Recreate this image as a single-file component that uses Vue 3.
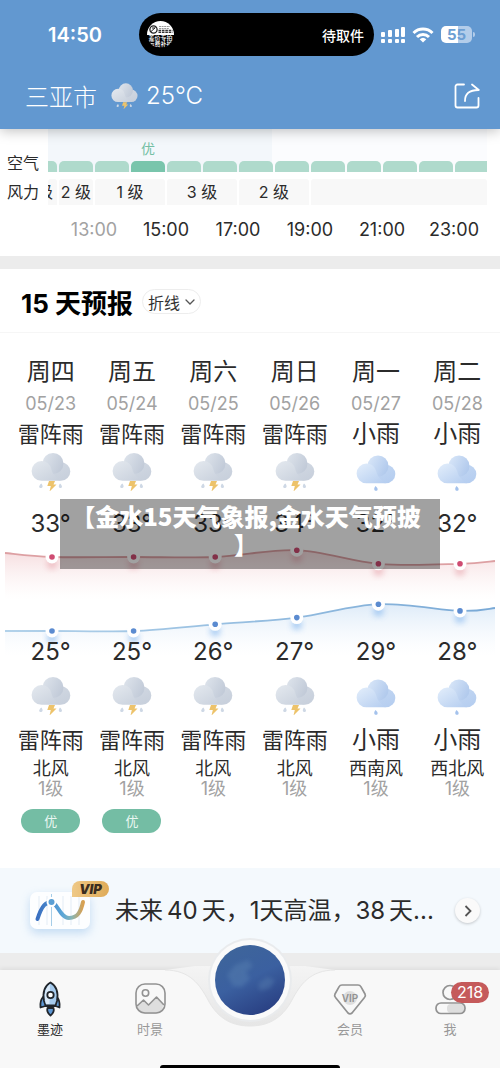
<script setup>
import { computed } from "vue";

// 空气质量，width 为可见宽度占比
const airList = [
  { width: 9 },
  { width: 34 },
  { width: 34 },
  { width: 34, active: true },
  { width: 34 },
  { width: 34 },
  { width: 34 },
  { width: 34 },
  { width: 34 },
  { width: 34 },
  { width: 34 },
  { width: 34 },
  { width: 32 },
];

// 风力
const windList = [
  { width: 9, text: "级" },
  { width: 34, text: "2 级" },
  { width: 70, text: "1 级" },
  { width: 70, text: "3 级" },
  { width: 70, text: "2 级" },
  { width: 176, text: "" },
];

const hours = ["13:00", "15:00", "17:00", "19:00", "21:00", "23:00"];

// 15 天预报
const days = [
  { week: "周四", date: "05/23", weather: "雷阵雨", icon: "storm", high: 33, low: 25, wind: "北风", air: "优" },
  { week: "周五", date: "05/24", weather: "雷阵雨", icon: "storm", high: 33, low: 25, wind: "北风", air: "优" },
  { week: "周六", date: "05/25", weather: "雷阵雨", icon: "storm", high: 33, low: 26, wind: "北风" },
  { week: "周日", date: "05/26", weather: "雷阵雨", icon: "storm", high: 34, low: 27, wind: "北风" },
  { week: "周一", date: "05/27", weather: "小雨", icon: "rain", high: 32, low: 29, wind: "西南风" },
  { week: "周二", date: "05/28", weather: "小雨", icon: "rain", high: 32, low: 28, wind: "西北风" },
];

const pointX = (i) => 52 + i * 81.6;

const highPoints = computed(() =>
  days.map((d, i) => ({ x: pointX(i), y: 17 + (33 - d.high) * 6.8 }))
);

const lowPoints = computed(() =>
  days.map((d, i) => ({ x: pointX(i), y: 91 - (d.low - 25) * 6.7 }))
);

// 平滑曲线
function smooth(points) {
  let path = `M${points[0].x} ${points[0].y}`;
  for (let i = 0; i < points.length - 1; i++) {
    const p0 = points[i - 1] || points[i];
    const p1 = points[i];
    const p2 = points[i + 1];
    const p3 = points[i + 2] || p2;
    path += ` C${p1.x + (p2.x - p0.x) / 6} ${p1.y + (p2.y - p0.y) / 6} ${p2.x - (p3.x - p1.x) / 6} ${p2.y - (p3.y - p1.y) / 6} ${p2.x} ${p2.y}`;
  }
  return path;
}

const highLine = computed(() =>
  smooth([{ x: 5, y: 13 }, ...highPoints.value, { x: 495, y: 21 }])
);
const lowLine = computed(() =>
  smooth([{ x: 5, y: 91 }, ...lowPoints.value, { x: 495, y: 68 }])
);
</script>

<template>
  <div class="page">
    <!-- 公用图形 -->
    <svg class="defs" aria-hidden="true">
      <defs>
        <linearGradient id="grayBack" x1="0" y1="0.200" x2="1" y2="0.700">
          <stop offset="0" stop-color="#dde3eb" />
          <stop offset="1" stop-color="#c0c9d7" />
        </linearGradient>
        <linearGradient id="grayRight" x1="0" y1="0" x2="0.5" y2="1">
          <stop offset="0" stop-color="#d2d9e3" />
          <stop offset="1" stop-color="#c8d0dc" />
        </linearGradient>
        <linearGradient id="grayFront" x1="0" y1="0" x2="0.9" y2="1">
          <stop offset="0" stop-color="#e4e9ef" />
          <stop offset="1" stop-color="#c8d0dc" />
        </linearGradient>
        <linearGradient id="blueBack" x1="0" y1="0.200" x2="1" y2="0.700">
          <stop offset="0" stop-color="#d8e6f8" />
          <stop offset="1" stop-color="#afc8ec" />
        </linearGradient>
        <linearGradient id="blueRight" x1="0" y1="0" x2="0.5" y2="1">
          <stop offset="0" stop-color="#c3d7f2" />
          <stop offset="1" stop-color="#b6cef0" />
        </linearGradient>
        <linearGradient id="blueFront" x1="0" y1="0" x2="0.9" y2="1">
          <stop offset="0" stop-color="#e3eefb" />
          <stop offset="1" stop-color="#b6cef0" />
        </linearGradient>
        <symbol id="storm" viewBox="0 0 40 40">
          <circle cx="30" cy="20.500" r="9.300" fill="url(#grayRight)" />
          <circle cx="22" cy="12.500" r="10.500" fill="url(#grayBack)" />
          <path d="M10.500 10a10 10 0 0 1 9.800 8c1.200 5.500 5 8.500 9.700 11.800H10.500a9.900 9.900 0 0 1 0-19.800z" fill="url(#grayFront)" />
          <path d="M18 30h6l-1.500 3.500h3l-7 7 1.300-5.500h-3.500z" fill="#edc36b" />
          <path d="M10.300 32.500c2 2.200 1.700 4.500-.500 4.500s-2.200-2.200.500-4.500zM29 32.500c2.700 2.300 2.500 4.500.500 4.500s-2.300-2.300-.500-4.500z" fill="#ced8e5" />
        </symbol>
        <symbol id="rain" viewBox="0 0 40 40">
          <circle cx="30" cy="23" r="9.300" fill="url(#blueRight)" />
          <circle cx="22" cy="15" r="10.500" fill="url(#blueBack)" />
          <path d="M10.500 12.500a10 10 0 0 1 9.800 8c1.200 5.500 5 8.500 9.700 11.800H10.500a9.900 9.900 0 0 1 0-19.800z" fill="url(#blueFront)" />
          <path d="M19.500 35c3 2.500 2.500 4.800.500 4.800s-2.500-2.300-.500-4.800z" fill="#a4c2ec" />
        </symbol>
      </defs>
    </svg>

    <header class="header">
      <div class="status-bar">
        <span class="clock">14:50</span>
        <div class="island">
          <div class="courier">
            <svg viewBox="0 0 27 14" aria-hidden="true">
              <circle cx="6.500" cy="8.500" r="3.600" fill="none" stroke="#222" stroke-width="1.300" />
              <path d="M4 10.500l4.500-4M5 7h3" stroke="#222" stroke-width="1" />
              <path d="M12 5.500h11M12 7.500h10" stroke="#999" stroke-width="1" stroke-dasharray="2 .6" />
              <path d="M11.500 9.500h14M11.500 11.300h14" stroke="#333" stroke-width="1.300" stroke-dasharray="2.600 .8" />
            </svg>
            <span>差价专拍</span>
            <span>运费补扩</span>
          </div>
          <span>待取件</span>
        </div>
        <div class="signals">
          <svg width="26" height="18" viewBox="0 0 26 18" fill="#fff" aria-label="信号">
            <rect x="0" y="6" width="4" height="5" rx="1" />
            <rect x="7" y="4" width="4" height="7" rx="1" />
            <rect x="14" y="3" width="4" height="8" rx="1" />
            <rect x="20" y="1" width="4" height="10" rx="1" />
            <rect x="0" y="13" width="4" height="4" rx="1" />
            <rect x="7" y="13" width="4" height="4" rx="1" />
            <rect x="14" y="13" width="4" height="4" rx="1" />
            <rect x="20" y="13" width="4" height="4" rx="1" />
          </svg>
          <svg width="22" height="16" viewBox="0 0 22 16" fill="none" stroke="#fff" stroke-width="3" aria-label="无线网络">
            <path d="M1.500 6a13.500 13.500 0 0 1 19 0" />
            <path d="M5 10a8.500 8.500 0 0 1 12 0" />
            <path d="M11 15.500l-3.300-3.200a4.800 4.800 0 0 1 6.600 0z" fill="#fff" stroke="none" />
          </svg>
          <div class="battery"><span>55</span></div>
        </div>
      </div>
      <div class="city-row">
        <span class="city">三亚市</span>
        <svg class="city-icon" aria-hidden="true"><use href="#storm" /></svg>
        <span class="now">25°C</span>
        <button class="share" type="button" aria-label="分享">
          <svg width="26" height="26" viewBox="0 0 26 26" fill="none" stroke="#fff" stroke-width="1.800" stroke-linecap="round" stroke-linejoin="round">
            <path d="M10 1.500H3.500a2 2 0 0 0-2 2v19a2 2 0 0 0 2 2h19a2 2 0 0 0 2-2V15" />
            <path d="M11 18c0-7 4-11 13.500-11M18 1.500L24.800 7" />
          </svg>
        </button>
      </div>
    </header>

    <!-- 逐小时 -->
    <section class="hourly">
      <div class="air-row">
        <span class="row-name">空气</span>
        <div class="strip">
          <div
            v-for="(a, i) in airList"
            :key="i"
            class="air-cell"
            :class="{ active: a.active }"
            :style="{ flexGrow: a.width }"
          >
            <span v-if="a.active">优</span>
            <i></i>
          </div>
        </div>
      </div>
      <div class="wind-row">
        <span class="row-name">风力</span>
        <div class="strip">
          <div v-for="(w, i) in windList" :key="i" class="wind-cell" :style="{ flexGrow: w.width }">
            <span>{{ w.text }}</span>
          </div>
        </div>
      </div>
      <div class="hours">
        <span v-for="h in hours" :key="h">{{ h }}</span>
      </div>
    </section>

    <!-- 15 天预报 -->
    <section class="forecast">
      <div class="forecast-title">
        <h2>15 天预报</h2>
        <button class="mode" type="button">
          折线
          <svg width="10" height="6" viewBox="0 0 10 6" fill="none" stroke="#555" stroke-width="1.300" stroke-linecap="round">
            <path d="M1 1l4 4 4-4" />
          </svg>
        </button>
      </div>

      <div class="days">
        <div v-for="d in days" :key="d.date" class="day">
          <span class="week">{{ d.week }}</span>
          <span class="date">{{ d.date }}</span>
          <span class="weather" :class="d.icon">{{ d.weather }}</span>
          <svg class="icon" aria-hidden="true"><use :href="'#' + d.icon" /></svg>
          <span class="temp">{{ d.high }}°</span>
        </div>
      </div>

      <svg class="chart" viewBox="0 0 500 96" aria-hidden="true">
        <defs>
          <linearGradient id="highFill" gradientUnits="userSpaceOnUse" x1="0" y1="10" x2="0" y2="60">
            <stop offset="0" stop-color="#e08a90" stop-opacity="0.300" />
            <stop offset="1" stop-color="#f5d5d5" stop-opacity="0" />
          </linearGradient>
          <linearGradient id="lowFill" gradientUnits="userSpaceOnUse" x1="0" y1="62" x2="0" y2="116">
            <stop offset="0" stop-color="#8ab8e6" stop-opacity="0.300" />
            <stop offset="1" stop-color="#d5e7f8" stop-opacity="0" />
          </linearGradient>
          <linearGradient id="lowStroke" x1="0" y1="0" x2="1" y2="0">
            <stop offset="0" stop-color="#b2d2ea" />
            <stop offset="1" stop-color="#79a9d6" />
          </linearGradient>
          <filter id="soft" x="-50%" y="-50%" width="200%" height="200%">
            <feGaussianBlur stdDeviation="3" />
          </filter>
        </defs>
        <path :d="highLine + ' V60 H5 Z'" fill="url(#highFill)" />
        <path :d="highLine" fill="none" stroke="#dda0a3" stroke-width="1.800" />
        <path :d="lowLine + ' V116 H5 Z'" fill="url(#lowFill)" />
        <path :d="lowLine" fill="none" stroke="url(#lowStroke)" stroke-width="1.800" />
        <g v-for="(p, i) in highPoints" :key="'h' + i">
          <circle :cx="p.x" :cy="p.y + 7" r="5" fill="#e8a5ad" opacity="0.700" filter="url(#soft)" />
          <circle :cx="p.x" :cy="p.y" r="6.500" fill="#fff" />
          <circle :cx="p.x" :cy="p.y" r="2.800" fill="#cf4c72" />
        </g>
        <g v-for="(p, i) in lowPoints" :key="'l' + i">
          <circle :cx="p.x" :cy="p.y + 7" r="5" fill="#8fbdf0" opacity="0.800" filter="url(#soft)" />
          <circle :cx="p.x" :cy="p.y" r="6.500" fill="#fff" />
          <circle :cx="p.x" :cy="p.y" r="2.800" fill="#5b8bd0" />
        </g>
      </svg>

      <div class="days">
        <div v-for="d in days" :key="d.date" class="day night">
          <span class="temp">{{ d.low }}°</span>
          <svg class="icon" aria-hidden="true"><use :href="'#' + d.icon" /></svg>
          <span class="weather" :class="d.icon">{{ d.weather }}</span>
          <span class="wind">{{ d.wind }}</span>
          <span class="level">1级</span>
          <span v-if="d.air" class="air">{{ d.air }}</span>
        </div>
      </div>

      <div class="caption">【金水15天气象报,金水天气预披<br />】</div>
    </section>

    <!-- 40 天入口 -->
    <section class="vip">
      <div class="vip-icon">
        <svg width="60" height="37" viewBox="0 0 60 37" aria-hidden="true">
          <defs>
            <linearGradient id="wave" x1="0" y1="0" x2="1" y2="0">
              <stop offset="0" stop-color="#3a6fc0" />
              <stop offset="0.550" stop-color="#5aa6d8" />
              <stop offset="0.750" stop-color="#86b5b5" />
              <stop offset="1" stop-color="#d9a050" />
            </linearGradient>
          </defs>
          <path d="M9 4v29M17 4v29M33 4v29M41 4v29M49 4v29" stroke="#e3ecf5" />
          <path d="M21.500 2v32" stroke="#a5cde8" />
          <path d="M7.500 27C12 13 16 10 21.500 10S30 26 39 26 51 19 53 10" fill="none" stroke="url(#wave)" stroke-width="4" stroke-linecap="round" />
          <circle cx="21.500" cy="10" r="5" fill="#fff" />
          <circle cx="21.500" cy="10" r="3" fill="#5b9fd4" />
        </svg>
        <b>VIP</b>
      </div>
      <p>未来<span class="num">40</span>天，1天高温，<span class="num after">38</span>天...</p>
      <button class="more" type="button" aria-label="查看更多">
        <svg width="8" height="12" viewBox="0 0 8 12" fill="none" stroke="#555" stroke-width="1.800">
          <path d="M1.500 1l5 5-5 5" />
        </svg>
      </button>
    </section>

    <nav class="tab-bar">
      <a class="tab active" href="#home">
        <svg width="32" height="36" viewBox="0 0 32 36" stroke="#20252b" stroke-width="1.800" stroke-linejoin="round" aria-hidden="true">
          <path d="M9 16c-2.500 3-3 6-2.500 10.500l5-1.500h10l4 1.500c.500-4.500 0-7.500-2.500-10.500z" fill="#5c96d3" />
          <path d="M16.500 1.500C10.500 5 8.500 12 10 20l1.500 4.500h10L23 20c1.500-8-.500-15-6.500-18.500z" fill="#a5caed" />
          <path d="M16 3c-5 4-6.500 11-4 20h3.500z" fill="#d9e9f8" stroke="none" />
          <circle cx="16.500" cy="14" r="3.200" fill="#fff" />
          <path d="M13.500 27c-1 3 .500 5.500 3 7.500 2.500-2 4-4.500 3-7.500z" fill="#5c96d3" />
        </svg>
        <span>墨迹</span>
      </a>
      <a class="tab" href="#scene">
        <svg width="32" height="36" viewBox="0 0 32 36" fill="none" stroke="#929292" stroke-width="1.600" stroke-linejoin="round" aria-hidden="true">
          <path d="M3 25l6.500-6 5 5 8-8 6.500 7c0 7-3 10-9 10h-8c-6 0-9-3-9-8z" fill="#dedede" stroke="none" />
          <rect x="2" y="3" width="29" height="29" rx="9" />
          <circle cx="11.500" cy="12" r="3.200" />
          <path d="M3 25l6.500-6 5 5 8-8 7.500 8" />
        </svg>
        <span>时景</span>
      </a>
      <a class="globe" href="#globe" aria-label="地球">
        <svg width="200" height="110" viewBox="0 0 200 110">
          <defs>
            <linearGradient id="notch" x1="0" y1="0" x2="0" y2="1">
              <stop offset="0" stop-color="#f4f4f4" />
              <stop offset="1" stop-color="#e6e6e6" />
            </linearGradient>
            <linearGradient id="earth" x1="0.200" y1="0" x2="0.700" y2="1">
              <stop offset="0" stop-color="#3e659a" />
              <stop offset="0.500" stop-color="#3b60a0" />
              <stop offset="1" stop-color="#293f82" />
            </linearGradient>
            <filter id="blurEarth"><feGaussianBlur stdDeviation="2" /></filter>
          </defs>
          <path d="M15 47C40 47 50 62 58 77S78 103 100 103 134 92 142 77 160 47 185 47L155 43H45z" fill="url(#notch)" />
          <path d="M15 47C40 47 50 62 58 77S78 103 100 103 134 92 142 77 160 47 185 47" fill="none" stroke="#e6e6e6" />
          <circle cx="100" cy="57" r="42" fill="#e9ebed" />
          <circle cx="100" cy="57" r="40" fill="#fafafa" />
          <circle cx="100" cy="57" r="35" fill="url(#earth)" />
          <path d="M77 52l8-10 13-5 5 6-7 6 4 7-8 8-9-1zM108 61l9-7 8 3-5 8-10 3z" fill="#6792bb" opacity="0.300" filter="url(#blurEarth)" />
        </svg>
      </a>
      <a class="tab" href="#member">
        <svg width="36" height="36" viewBox="0 0 36 36" fill="none" stroke="#929292" stroke-width="1.700" stroke-linejoin="round" aria-hidden="true">
          <circle cx="18" cy="17" r="7" fill="#dedede" stroke="none" />
          <path d="M10 4h16q2 0 3 1.800l4 7.200q1 2-.500 3.500L20 32q-2 1.800-4 0L3.500 16.500Q2 15 3 13l4-7.200Q8 4 10 4z" />
          <text x="18" y="21" text-anchor="middle" class="gem-text">VIP</text>
        </svg>
        <span>会员</span>
      </a>
      <a class="tab" href="#me">
        <svg width="32" height="36" viewBox="0 0 32 36" fill="none" stroke="#929292" stroke-width="1.700" aria-hidden="true">
          <rect x="13" y="23" width="17" height="9" rx="4" fill="#dedede" stroke="none" />
          <circle cx="16" cy="11.500" r="7" />
          <rect x="2" y="22" width="29" height="10.500" rx="5" />
        </svg>
        <span>我</span>
        <em>218</em>
      </a>
      <div class="home-line"></div>
    </nav>
  </div>
</template>

<style>
body {
  margin: 0;
  background: #f8f8f8;
}
</style>

<style scoped>
.page {
  font-family: "Inter", "Noto Sans CJK SC", sans-serif;
  color: #2b2b2b;
  background: #ececec;
}

.defs {
  display: block;
  width: 0;
  height: 0;
}

button {
  font-family: inherit;
  padding: 0;
  border: 0;
  background: none;
}

svg {
  display: block;
  flex-shrink: 0;
}

/* 顶部 */
.header {
  position: relative;
  z-index: 2;
  color: #fff;
  background: #6298d0;
  box-shadow: 0 2px 12px rgba(0, 0, 0, 0.25);
}

.status-bar {
  display: flex;
  align-items: center;
  padding: 13px 24px 0 48px;
}

.clock {
  width: 91px;
  font-size: 20px;
  font-weight: 600;
}

.island {
  display: flex;
  flex: 1;
  align-items: center;
  justify-content: space-between;
  box-sizing: border-box;
  height: 43px;
  padding: 0 10px 0 8px;
  border-radius: 22px;
  background: #000;
  font-size: 14px;
  font-weight: 500;
}

.courier {
  width: 27px;
  height: 27px;
  border-radius: 50%;
  overflow: hidden;
  background: #000;
  font-size: 6px;
  line-height: 6px;
  text-align: center;
}

.courier svg {
  background: #fff;
}

.courier span {
  display: block;
  white-space: nowrap;
}

.signals {
  display: flex;
  align-items: center;
  gap: 5px;
  margin-left: 7px;
}

.battery {
  position: relative;
  width: 31px;
  height: 17px;
  margin: 0 4px 0 2px;
  border-radius: 5px;
  background: linear-gradient(90deg, #fff 54%, #b3cdea 54%);
  color: #6d9fd3;
  font-size: 15px;
  font-weight: 700;
  line-height: 17px;
  text-align: center;
}

.battery::after {
  content: "";
  position: absolute;
  top: 6px;
  right: -3px;
  width: 2px;
  height: 5px;
  border-radius: 0 2px 2px 0;
  background: #b3cdea;
}

.city-row {
  display: flex;
  align-items: center;
  height: 73px;
  padding: 6px 20px 0 25px;
  box-sizing: border-box;
  font-size: 24px;
  font-weight: 300;
}

.city-icon {
  width: 27px;
  height: 27px;
  margin: 0 8px 0 14px;
}

.share {
  margin-left: auto;
}

/* 逐小时 */
.hourly {
  padding: 0 13px 11px 0;
  background: #fff;
}

.air-row,
.wind-row {
  display: flex;
}

.row-name {
  flex: 0 0 41px;
  padding-left: 7px;
  font-size: 16px;
  line-height: 26px;
  white-space: nowrap;
}

.strip {
  display: flex;
  flex: 1;
  gap: 2px;
  min-width: 0;
}

.air-row {
  height: 43px;
}

.air-row .strip {
  background: linear-gradient(90deg, #f3f7fb 51%, #fbfcfe 51%);
}

.air-row .row-name {
  padding-top: 21px;
}

.air-cell {
  display: flex;
  flex: 1 1 0;
  flex-direction: column;
  align-items: center;
  justify-content: flex-end;
  min-width: 0;
  color: #74bfa4;
  font-size: 14px;
  line-height: 20px;
}

.air-cell span {
  margin-bottom: 2px;
}

.air-cell i {
  width: 100%;
  height: 11px;
  border-radius: 5px 5px 0 0;
  background: #afdacc;
}

.air-cell:first-child i {
  border-top-left-radius: 0;
}

.air-cell:last-child i {
  border-top-right-radius: 0;
}

.air-cell.active i {
  background: #79c5ac;
}

.wind-row {
  margin-top: 7px;
}

.wind-cell {
  display: flex;
  flex: 1 1 0;
  justify-content: center;
  min-width: 0;
  height: 26px;
  overflow: hidden;
  background: #f8f8f8;
  border-radius: 3px 3px 0 0;
  font-size: 16px;
  line-height: 26px;
  white-space: nowrap;
}

.wind-cell:first-child {
  justify-content: flex-end;
}

.wind-cell:first-child span {
  margin-right: 4px;
}

.hours {
  display: grid;
  grid-template-columns: repeat(6, 1fr);
  margin-top: 10px;
  padding-left: 58px;
  margin-right: -3px;
  font-size: 18px;
  line-height: 30px;
  text-align: center;
}

.hours span:first-child {
  color: #a2a2a2;
}

/* 15 天预报 */
.forecast {
  position: relative;
  margin-top: 13px;
  padding-bottom: 35px;
  background: #fff;
}

.forecast-title {
  display: flex;
  align-items: center;
  gap: 9px;
  height: 64px;
  padding: 2px 21px 0;
  border-bottom: 1px solid #f6f6f6;
  box-sizing: border-box;
}

.forecast-title h2 {
  margin: 0;
  color: #000;
  font-size: 26px;
  font-weight: 700;
}

.mode {
  display: flex;
  align-items: center;
  gap: 5px;
  height: 25px;
  padding: 0 5px;
  border: 1px solid #ededed;
  border-radius: 13px;
  color: #333;
  font-size: 16px;
}

.days {
  position: relative;
  display: grid;
  grid-template-columns: repeat(6, minmax(0, 1fr));
  padding: 0 2px 0 10px;
}

.forecast-title + .days {
  padding-top: 23px;
}

.day {
  display: flex;
  flex-direction: column;
  align-items: center;
  white-space: nowrap;
}

.week {
  font-size: 24px;
  line-height: 32px;
}

.date {
  color: #a2a2a2;
  font-size: 18px;
  line-height: 32px;
}

.weather {
  font-size: 22px;
  line-height: 28px;
}

.weather.rain {
  font-size: 24px;
}

.icon {
  width: 40px;
  height: 40px;
  margin: 3px 0 17px;
  overflow: visible;
}

.temp {
  font-size: 24px;
  line-height: 32px;
}

.night .icon {
  margin: 7px 0 11px;
}

.chart {
  width: 100%;
  overflow: visible;
}

.wind {
  margin-top: 5px;
  font-size: 18px;
  line-height: 20px;
}

.level {
  color: #a2a2a2;
  font-size: 18px;
  line-height: 20px;
}

.air {
  width: 59px;
  margin-top: 10px;
  border-radius: 12px;
  background: #74bda4;
  color: #eaf7f2;
  font-size: 13px;
  line-height: 24px;
  text-align: center;
}

.caption {
  position: absolute;
  top: 230px;
  left: 12%;
  right: 12%;
  box-sizing: border-box;
  height: 70px;
  padding: 3px 8px 0 0;
  background: rgba(0, 0, 0, 0.37);
  color: #fff;
  font-family: "Noto Sans CJK SC", sans-serif;
  font-size: 24px;
  font-weight: 900;
  line-height: 28px;
  text-align: center;
  white-space: nowrap;
}

/* 40 天入口 */
.vip {
  display: flex;
  align-items: center;
  height: 85px;
  padding: 0 20px 0 30px;
  box-sizing: border-box;
  background: #f4f9fd;
}

.vip-icon {
  position: relative;
  border-radius: 7px;
  background: #fdfeff;
  box-shadow: 0 4px 10px rgba(120, 175, 230, 0.4);
}

.vip-icon b {
  position: absolute;
  top: -11px;
  left: 42px;
  width: 37px;
  border-radius: 8px 8px 8px 0;
  background: linear-gradient(90deg, #efc987, #dfab58);
  color: #3a2d20;
  font-size: 13px;
  font-style: italic;
  font-weight: 900;
  line-height: 16px;
  text-align: center;
}

.vip p {
  flex: 1;
  min-width: 0;
  margin: 0 20px 0 25px;
  font-size: 24px;
  line-height: 32px;
  white-space: nowrap;
}

.num {
  margin: 0 4px;
}

.num.after {
  margin-left: 0;
}

.more {
  display: flex;
  flex-shrink: 0;
  align-items: center;
  justify-content: center;
  width: 25px;
  height: 25px;
  border-radius: 50%;
  background: #fafafa;
  box-shadow: 0 1px 3px rgba(0, 0, 0, 0.2);
}

/* 底部导航 */
.tab-bar {
  position: relative;
  display: grid;
  grid-template-columns: repeat(5, minmax(0, 1fr));
  margin-top: 17px;
  height: 98px;
  background: #f8f8f8;
  box-shadow: 0 -2px 4px rgba(0, 0, 0, 0.06);
}

.tab {
  position: relative;
  z-index: 1;
  display: flex;
  flex-direction: column;
  align-items: center;
  padding-top: 11px;
  color: #999;
  font-size: 13px;
  line-height: 24px;
  text-decoration: none;
}

.tab.active {
  color: #2b2b2b;
}

.tab em {
  position: absolute;
  top: 12px;
  left: 51%;
  width: 38px;
  border-radius: 11px;
  background: #c55a5b;
  color: #fff;
  font-size: 16px;
  font-style: normal;
  line-height: 21px;
  text-align: center;
}

.gem-text {
  fill: #929292;
  stroke: none;
  font-size: 10px;
  font-weight: 600;
}

.globe {
  display: flex;
  justify-content: center;
  margin-top: -47px;
}

.home-line {
  position: absolute;
  bottom: 0;
  left: 32%;
  right: 32%;
  height: 3px;
  border-radius: 3px 3px 0 0;
  background: #000;
}
</style>
